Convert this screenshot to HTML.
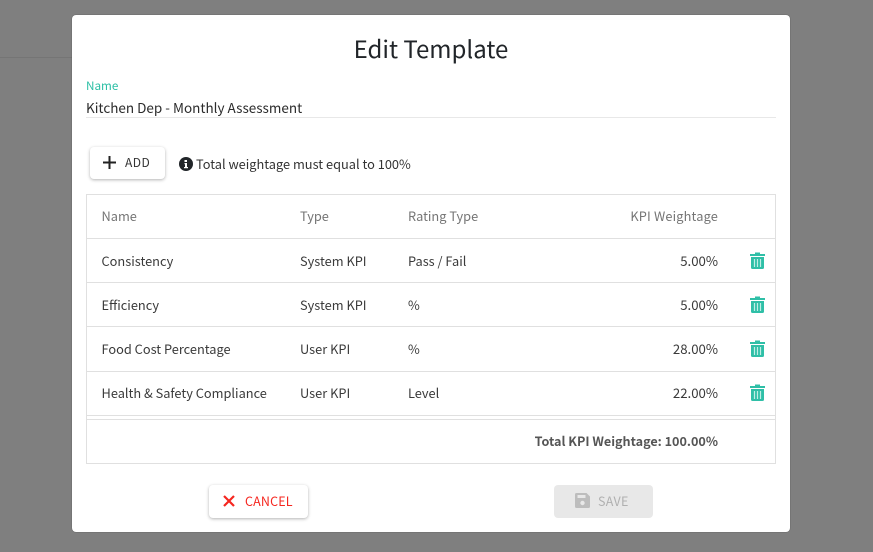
<!DOCTYPE html>
<html><head><meta charset="utf-8"><style>
html,body{margin:0;padding:0}
body{width:873px;height:552px;overflow:hidden;background:#7f7f7f;position:relative;font-family:"Noto Sans CJK JP","Liberation Sans",sans-serif;color:#333}
.a{position:absolute;white-space:nowrap}
.t{position:absolute;white-space:nowrap;font-size:12.8px;line-height:20px;color:#3a3a3a}
.h{color:#757575}
.l{position:absolute;left:87px;width:688px;height:1px;background:#e0e0e0}
svg{display:block}
</style></head><body>
<div class="a" style="left:0;top:57px;width:72px;height:1px;background:#757575"></div>
<div class="a" style="left:72px;top:15px;width:718px;height:517px;background:#fff;border-radius:4px;box-shadow:0 0 1px #444"></div>
<div class="a" style="left:72px;width:718px;top:30px;text-align:center;font-size:24px;line-height:36px;color:#212529">Edit Template</div>
<div class="a" style="left:86px;top:77px;font-size:11.700px;line-height:18px;color:#2bbfa5">Name</div>
<div class="a" style="left:86px;top:97px;font-size:13.500px;line-height:20px;color:#2b2b2b">Kitchen Dep - Monthly Assessment</div>
<div class="a" style="left:86px;top:117px;width:690px;height:1px;background:#e8e8e8"></div>

<div class="a" style="left:90px;top:147px;width:75px;height:32px;background:#fff;border-radius:4px;box-shadow:0 1px 3px rgba(0,0,0,.3)"></div>
<svg class="a" style="left:102px;top:155px" width="15" height="15" viewBox="0 0 15 15"><path d="M7.500 1v13M1 7.500h13" stroke="#222" stroke-width="2"/></svg>
<div class="a" style="left:125px;top:153px;font-size:12px;line-height:20px;letter-spacing:.5px;color:#333">ADD</div>
<svg class="a" style="left:179px;top:157px" width="14" height="14" viewBox="0 0 14 14"><circle cx="7" cy="7" r="7" fill="#212529"/><path d="M5.500 3h2.500v2h-2.500zM5.500 6h2.500v4h1v1.300h-4v-1.300h1v-2.700h-.5z" fill="#fff"/></svg>
<div class="a" style="left:196px;top:154px;font-size:12.800px;line-height:20px;color:#333">Total weightage must equal to 100%</div>

<div class="a" style="left:86px;top:194px;width:688px;height:268px;border:1px solid #e0e0e0"></div>
<div class="l" style="top:238px"></div><div class="l" style="top:282px"></div><div class="l" style="top:326px"></div><div class="l" style="top:371px"></div><div class="l" style="top:415px"></div><div class="l" style="top:419px"></div>

<div class="t h" style="left:101.500px;top:206px">Name</div><div class="t h" style="left:300px;top:206px">Type</div><div class="t h" style="left:408px;top:206px">Rating Type</div>
<div class="t h" style="right:155px;top:206px;letter-spacing:.15px">KPI Weightage</div>

<div class="t" style="left:101.500px;top:251px">Consistency</div><div class="t" style="left:300px;top:251px">System KPI</div><div class="t" style="left:408px;top:251px">Pass / Fail</div><div class="t" style="right:155px;top:251px;font-size:13.200px">5.00%</div>
<div class="t" style="left:101.500px;top:295px">Efficiency</div><div class="t" style="left:300px;top:295px">System KPI</div><div class="t" style="left:408px;top:295px">%</div><div class="t" style="right:155px;top:295px;font-size:13.200px">5.00%</div>
<div class="t" style="left:101.500px;top:339px">Food Cost Percentage</div><div class="t" style="left:300px;top:339px">User KPI</div><div class="t" style="left:408px;top:339px">%</div><div class="t" style="right:155px;top:339px;font-size:13.200px">28.00%</div>
<div class="t" style="left:101.500px;top:383px">Health &amp; Safety Compliance</div><div class="t" style="left:300px;top:383px">User KPI</div><div class="t" style="left:408px;top:383px">Level</div><div class="t" style="right:155px;top:383px;font-size:13.200px">22.00%</div>
<div class="t" style="right:155px;top:431px;font-size:12.600px;font-weight:700;color:#555">Total KPI Weightage: 100.00%</div>

<svg class="a" style="left:750px;top:252px" width="15" height="17" viewBox="0 0 15 17"><path d="M5 0.500h5v1.500h5v2h-15v-2h5zM1 5h13v10.500a1.500 1.500 0 0 1-1.500 1.500h-10a1.500 1.500 0 0 1-1.500-1.500z" fill="#2fbfa7"/><path d="M4.500 7v8M7.500 7v8M10.500 7v8" stroke="#bfeee5" stroke-width="1.200"/></svg>
<svg class="a" style="left:750px;top:296px" width="15" height="17" viewBox="0 0 15 17"><path d="M5 0.500h5v1.500h5v2h-15v-2h5zM1 5h13v10.500a1.500 1.500 0 0 1-1.500 1.500h-10a1.500 1.500 0 0 1-1.500-1.500z" fill="#2fbfa7"/><path d="M4.500 7v8M7.500 7v8M10.500 7v8" stroke="#bfeee5" stroke-width="1.200"/></svg>
<svg class="a" style="left:750px;top:340px" width="15" height="17" viewBox="0 0 15 17"><path d="M5 0.500h5v1.500h5v2h-15v-2h5zM1 5h13v10.500a1.500 1.500 0 0 1-1.500 1.500h-10a1.500 1.500 0 0 1-1.500-1.500z" fill="#2fbfa7"/><path d="M4.500 7v8M7.500 7v8M10.500 7v8" stroke="#bfeee5" stroke-width="1.200"/></svg>
<svg class="a" style="left:750px;top:384px" width="15" height="17" viewBox="0 0 15 17"><path d="M5 0.500h5v1.500h5v2h-15v-2h5zM1 5h13v10.500a1.500 1.500 0 0 1-1.500 1.500h-10a1.500 1.500 0 0 1-1.500-1.500z" fill="#2fbfa7"/><path d="M4.500 7v8M7.500 7v8M10.500 7v8" stroke="#bfeee5" stroke-width="1.200"/></svg>

<div class="a" style="left:209px;top:485px;width:99px;height:33px;background:#fff;border-radius:4px;box-shadow:0 1px 3px rgba(0,0,0,.3)"></div>
<svg class="a" style="left:223px;top:495px" width="12" height="12" viewBox="0 0 12 12"><path d="M1 1l10 10M11 1L1 11" stroke="#f5261f" stroke-width="2.200"/></svg>
<div class="a" style="left:245px;top:491px;font-size:12.500px;line-height:20px;letter-spacing:.15px;color:#f5261f">CANCEL</div>
<div class="a" style="left:554px;top:485px;width:99px;height:33px;background:#e8e8e8;border-radius:4px"></div>
<svg class="a" style="left:575px;top:493px" width="15" height="15" viewBox="0 0 15 15"><path d="M1.500 0h10l3.500 3.500v10a1.500 1.500 0 0 1-1.500 1.500h-12a1.500 1.500 0 0 1-1.500-1.500v-12a1.500 1.500 0 0 1 1.500-1.500z" fill="#bdbdbd"/><rect x="2.500" y="2" width="8" height="3" fill="#e8e8e8"/><circle cx="7.500" cy="10" r="2.200" fill="#e8e8e8"/></svg>
<div class="a" style="left:598px;top:491px;font-size:12.500px;line-height:20px;letter-spacing:.3px;color:#b0b0b0">SAVE</div>
</body></html>
